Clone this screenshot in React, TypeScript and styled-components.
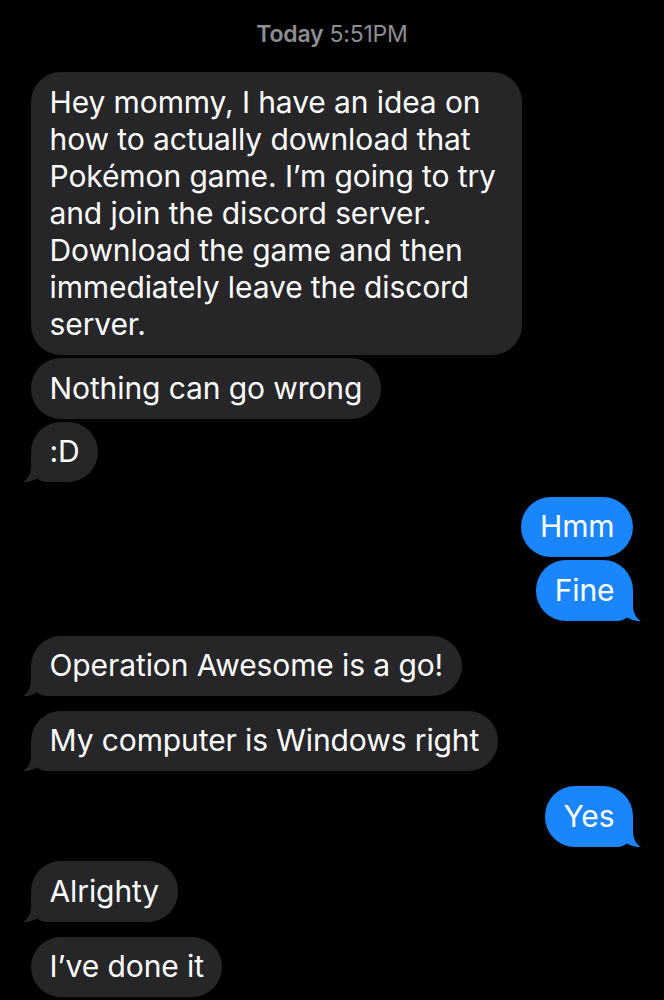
import React from "react";
import styled, { createGlobalStyle } from "styled-components";

const Global = createGlobalStyle`
  html, body { margin: 0; padding: 0; background: #000; }
  body { font-family: Inter, "Noto Sans", sans-serif; -webkit-font-smoothing: antialiased; }
`;

const Screen = styled.div`
  width: 664px;
  min-height: 1000px;
  box-sizing: border-box;
  padding: 0 31px;
  display: flex;
  flex-direction: column;
  background: #000;
  overflow: hidden;
`;

const Stamp = styled.div`
  padding-top: 20px;
  margin-bottom: 24px;
  font-size: 23px;
  line-height: 28px;
  color: #8d8d92;
  text-align: center;
  letter-spacing: -0.2px;
`;

const StampDay = styled.span`
  font-weight: 600;
  margin-right: 6px;
`;

const Bubble = styled.div<{ $me: boolean; $tail: boolean; $gap: number }>`
  position: relative;
  box-sizing: border-box;
  align-self: ${(p) => (p.$me ? "flex-end" : "flex-start")};
  max-width: 491px;
  margin-top: ${(p) => p.$gap}px;
  padding: 11.7px 18.5px;
  font-size: 30px;
  line-height: 37.1px;
  letter-spacing: -0.1px;
  color: #fff;
  background: ${(p) => (p.$me ? "#1b85fb" : "#262629")};
  border-radius: ${(p) =>
    p.$tail ? (p.$me ? "30px 30px 16px 30px" : "30px 30px 30px 16px") : "30px"};
`;

const TailSvg = styled.svg<{ $me: boolean }>`
  position: absolute;
  bottom: 0;
  width: 16px;
  height: 26px;
  ${(p) => (p.$me ? "right: -8px; transform: scaleX(-1);" : "left: -8px;")}
`;

function Tail({ me }: { me: boolean }) {
  return (
    <TailSvg $me={me} viewBox="0 0 16 26">
      <path
        d="M8 0 L8 10 C8 18 4.5 23.5 0 26 C5 26.4 10 25 14 22.5 L14 0 Z"
        fill={me ? "#1b85fb" : "#262629"}
      />
    </TailSvg>
  );
}

type Msg = { me: boolean; text: string; tail: boolean };

const messages: Msg[] = [
  {
    me: false,
    tail: false,
    text:
      "Hey mommy, I have an idea on how to actually download that Pokémon game. I’m going to try and join the discord server. Download the game and then immediately leave the discord server.",
  },
  { me: false, tail: false, text: "Nothing can go wrong" },
  { me: false, tail: true, text: ":D" },
  { me: true, tail: false, text: "Hmm" },
  { me: true, tail: true, text: "Fine" },
  { me: false, tail: true, text: "Operation Awesome is a go!" },
  { me: false, tail: true, text: "My computer is Windows right" },
  { me: true, tail: true, text: "Yes" },
  { me: false, tail: true, text: "Alrighty" },
  { me: false, tail: false, text: "I’ve done it" },
];

export default function App() {
  return (
    <>
      <Global />
      <Screen>
        <Stamp>
          <StampDay>Today</StampDay>5:51PM
        </Stamp>
        {messages.map((m, i) => {
          const gap = i === 0 ? 0 : messages[i - 1].tail ? 14.8 : 3;
          return (
            <Bubble key={i} $me={m.me} $tail={m.tail} $gap={gap}>
              {m.text}
              {m.tail && <Tail me={m.me} />}
            </Bubble>
          );
        })}
      </Screen>
    </>
  );
}
